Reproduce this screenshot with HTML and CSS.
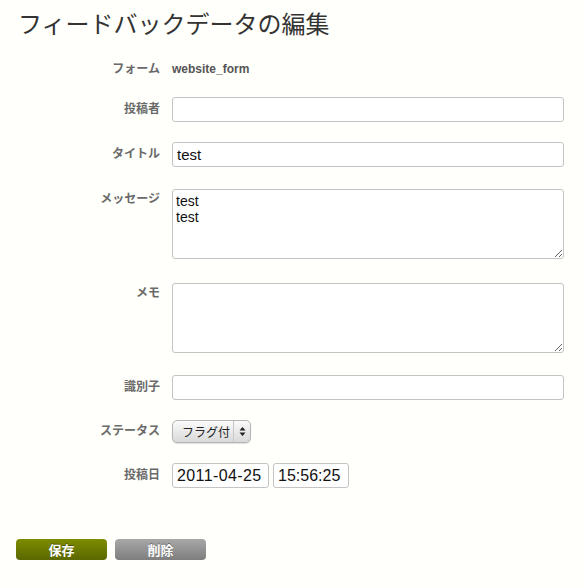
FILE: index.html
```html
<!DOCTYPE html>
<html lang="ja">
<head>
<meta charset="utf-8">
<title>フィードバックデータの編集</title>
<link rel="stylesheet" href="styles.css">
</head>
<body>
<h1 class="page-title">フィードバックデータの編集</h1>
<form class="edit-form">
  <div class="form-grid">
    <div class="label label-text">フォーム</div>
    <div class="static-value">website_form</div>

    <label class="label label-center" for="author">投稿者</label>
    <input class="text-input" id="author" type="text" value="">

    <label class="label label-center" for="title">タイトル</label>
    <input class="text-input" id="title" type="text" value="test">

    <label class="label label-top" for="message">メッセージ</label>
    <textarea class="text-area" id="message">test
test</textarea>

    <label class="label label-top" for="memo">メモ</label>
    <textarea class="text-area" id="memo"></textarea>

    <label class="label label-center" for="ident">識別子</label>
    <input class="text-input" id="ident" type="text" value="">

    <div class="label label-center">ステータス</div>
    <div class="select-box">
      <span class="select-value">フラグ付</span>
      <span class="select-arrows">
        <svg width="7" height="11" viewBox="0 0 7 11"><path d="M3.5 1 L6.5 4.5 L0.5 4.5 Z M3.5 10 L6.5 6.5 L0.5 6.5 Z" fill="#222"/></svg>
      </span>
    </div>

    <div class="label label-center">投稿日</div>
    <div class="date-row">
      <input class="text-input date-input" type="text" value="2011-04-25">
      <input class="text-input time-input" type="text" value="15:56:25">
    </div>
  </div>
  <div class="actions">
    <button type="button" class="btn btn-save">保存</button>
    <button type="button" class="btn btn-delete">削除</button>
  </div>
</form>
</body>
</html>
```
FILE: styles.css
```css
html, body {
  margin: 0;
  padding: 0;
  background: #fffffb;
}
body {
  font-family: "Liberation Sans", "Noto Sans CJK JP", sans-serif;
  color: #333;
}
.page-title {
  margin: 0;
  padding: 7px 0 0 18px;
  font-family: "Noto Sans CJK JP", sans-serif;
  font-weight: normal;
  font-size: 24px;
  line-height: 32px;
  color: #333;
}
.edit-form {
  margin-top: 23px;
}
.form-grid {
  display: grid;
  grid-template-columns: 160px 392px;
  column-gap: 12px;
  row-gap: 20px;
}
.label {
  text-align: right;
  font-family: "Liberation Sans", "Noto Sans CJK JP", sans-serif;
  font-weight: bold;
  font-size: 12px;
  line-height: 15px;
  color: #6a6a6a;
}
.label-text { align-self: start; }
.label-center { align-self: center; }
.label-top { align-self: start; padding-top: 5px; }
.static-value {
  font-weight: bold;
  font-size: 12px;
  line-height: 15px;
  color: #555;
}
.text-input {
  display: block;
  box-sizing: border-box;
  width: 392px;
  height: 25px;
  margin: 0;
  padding: 0 4px;
  border: 1px solid #c4c4c4;
  border-radius: 3px;
  background: #fff;
  font-family: "Liberation Sans", sans-serif;
  font-size: 15px;
  color: #111;
  outline: none;
}
.text-area {
  display: block;
  box-sizing: border-box;
  width: 392px;
  height: 70px;
  margin: 2px 0;
  padding: 3px 3px;
  border: 1px solid #c4c4c4;
  border-radius: 3px;
  background: #fff;
  font-family: "Liberation Sans", sans-serif;
  font-size: 14px;
  line-height: 16px;
  color: #111;
  outline: none;
}
.select-box {
  display: flex;
  align-items: stretch;
  box-sizing: border-box;
  width: 79px;
  height: 23px;
  border: 1px solid #b5b5b5;
  border-radius: 5px;
  background: linear-gradient(#fbfbfb, #e6e6e6 60%, #d9d9d9);
  box-shadow: 0 1px 1px rgba(0,0,0,0.12);
}
.select-value {
  flex: 1;
  padding-left: 9px;
  font-family: "Noto Sans CJK JP", sans-serif;
  font-size: 12px;
  line-height: 21px;
  color: #222;
}
.select-arrows {
  width: 16px;
  display: flex;
  align-items: center;
  justify-content: center;
  border-left: 1px solid #c8c8c8;
}
.date-row {
  display: flex;
  gap: 4px;
}
.date-input {
  width: 97px;
  font-size: 16px;
  letter-spacing: 0.4px;
  padding: 0 4px;
}
.time-input {
  width: 76px;
  font-size: 16px;
  padding: 0 4px;
}
.actions {
  display: flex;
  gap: 8px;
  margin-top: 51px;
  padding-left: 16px;
}
.btn {
  box-sizing: border-box;
  width: 91px;
  height: 21px;
  padding: 0;
  border: none;
  border-radius: 4px;
  font-family: "Noto Sans CJK JP", sans-serif;
  font-weight: bold;
  font-size: 13px;
  line-height: 21px;
  color: #fff;
  text-shadow: 0 -1px 0 rgba(0,0,0,0.35);
  cursor: pointer;
}
.btn-save {
  background: linear-gradient(#7d8c00, #5b6700);
}
.btn-delete {
  background: linear-gradient(#a8a8a8, #7e7e7e);
}
```
